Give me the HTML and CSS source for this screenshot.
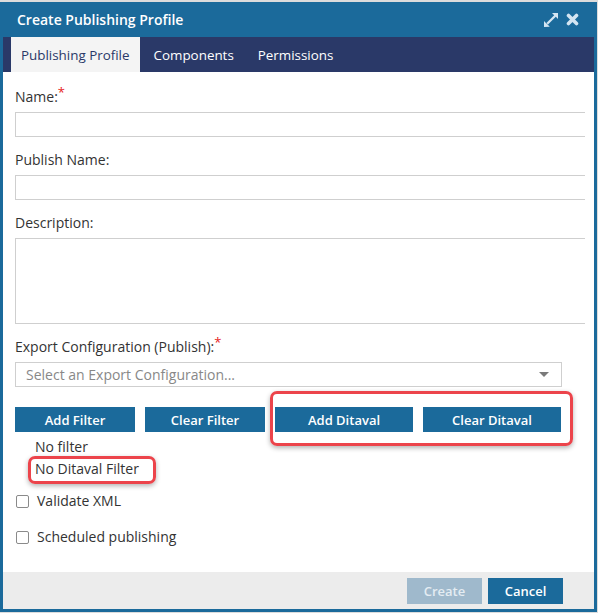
FILE: index.html
```html
<!DOCTYPE html>
<html>
<head>
<meta charset="utf-8">
<link rel="stylesheet" href="styles.css">
</head>
<body>
<div class="dialog">
  <div class="header">
    <span class="title">Create Publishing Profile</span>
    <span class="hicons">
      <svg class="ico" width="16" height="16" viewBox="0 0 16 16">
        <path d="M9 1 H15 V7 L12.8 4.8 L5 12.6 L3.4 11 L11.2 3.2 Z" fill="#d4e5f2"/>
        <path d="M1 15 V9 L3.2 11.2 L4.6 12.6 L6.8 14.8 Z" fill="#d4e5f2"/>
      </svg>
      <svg class="ico" width="13" height="13" viewBox="0 0 13 13">
        <path d="M2.5 2.5 L10.5 10.5 M10.5 2.5 L2.5 10.5" stroke="#d4e5f2" stroke-width="3.6" stroke-linecap="round" fill="none"/>
      </svg>
    </span>
  </div>
  <div class="tabs">
    <div class="tab active">Publishing Profile</div>
    <div class="tab">Components</div>
    <div class="tab">Permissions</div>
  </div>
  <div class="content">
    <div class="label">Name:<span class="req">*</span></div>
    <div class="input"></div>
    <div class="label">Publish Name:</div>
    <div class="input"></div>
    <div class="label">Description:</div>
    <div class="input textarea"></div>
    <div class="label">Export Configuration (Publish):<span class="req">*</span></div>
    <div class="select"><span>Select an Export Configuration...</span><span class="caret"></span></div>
    <div class="btnrow">
      <div class="btn w120">Add Filter</div>
      <div class="btn w120">Clear Filter</div>
      <div class="btn w138">Add Ditaval</div>
      <div class="btn w138">Clear Ditaval</div>
    </div>
    <div class="status">
      <div class="sline">No filter</div>
      <div class="sline">No Ditaval Filter</div>
    </div>
    <div class="check first"><span class="box"></span>Validate XML</div>
    <div class="check"><span class="box"></span>Scheduled publishing</div>
    <div class="mark mark1"></div>
    <div class="mark mark2"></div>
  </div>
  <div class="footer">
    <div class="fbtn disabled">Create</div>
    <div class="fbtn">Cancel</div>
  </div>
</div>
</body>
</html>
```
FILE: styles.css
```css
html, body {
  margin: 0;
  padding: 0;
  background: #dcdcdc;
  font-family: "Open Sans", "Liberation Sans", sans-serif;
  font-size: 14px;
  color: #333;
}
.dialog {
  margin-top: 2px;
  width: 597px;
  height: 610px;
  box-sizing: border-box;
  border: 3px solid #1b6a9b;
  border-top: 0;
  display: flex;
  flex-direction: column;
  background: #fff;
}
.header {
  height: 35px;
  flex: none;
  background: #1b6a9b;
  color: #fff;
  display: flex;
  align-items: center;
  justify-content: space-between;
  padding: 0 15px 0 14px;
}
.title {
  font-weight: 600;
  font-size: 14px;
}
.hicons {
  display: flex;
  align-items: center;
  gap: 7px;
}
.ico { display: block; }
.tabs {
  height: 35px;
  flex: none;
  background: #2a3968;
  display: flex;
  padding-left: 8px;
}
.tab {
  color: #fff;
  padding: 0 10px;
  margin-right: 4px;
  line-height: 36px;
  font-size: 13.4px;
}
.tab.active {
  background: #f4f4f4;
  color: #2a3968;
}
.content {
  flex: 1;
  position: relative;
  background: #fff;
  padding: 15px 9px 0 12px;
}
.label {
  line-height: 20px;
  margin-bottom: 5px;
}
.req {
  color: #e62222;
  position: relative;
  top: -5px;
  font-size: 13px;
}
.input {
  height: 25px;
  box-sizing: border-box;
  border: 1px solid #cfcfcf;
  border-right: 0;
  margin-bottom: 13px;
}
.textarea {
  height: 86px;
}
.select {
  width: 547px;
  height: 25px;
  box-sizing: border-box;
  border: 1px solid #cfcfcf;
  display: flex;
  align-items: center;
  justify-content: space-between;
  padding: 0 12px 0 10px;
  color: #888;
}
.caret {
  width: 0;
  height: 0;
  border-left: 5px solid transparent;
  border-right: 5px solid transparent;
  border-top: 5px solid #7a7a7a;
}
.btnrow {
  display: flex;
  gap: 10px;
  margin-top: 20px;
}
.btn {
  height: 25px;
  line-height: 26px;
  background: #1b6a9b;
  color: #fff;
  text-align: center;
  font-weight: 600;
  font-size: 13px;
}
.w120 { width: 120px; }
.w138 { width: 138px; }
.status {
  margin-top: 4px;
  padding-left: 20px;
}
.sline {
  line-height: 22px;
}
.check {
  display: flex;
  align-items: center;
  line-height: 20px;
  margin-top: 16px;
}
.check.first { margin-top: 11px; }
.box {
  width: 13px;
  height: 13px;
  box-sizing: border-box;
  border: 1px solid #8a8a8a;
  border-radius: 2px;
  margin: 0 8px 0 1px;
  background: #fff;
}
.mark {
  position: absolute;
  border: 3px solid #ec444b;
  border-radius: 7px;
  box-shadow: 0 2px 5px rgba(0,0,0,0.3);
  box-sizing: border-box;
}
.mark1 {
  left: 267px;
  top: 319px;
  width: 303px;
  height: 55px;
}
.mark2 {
  left: 25px;
  top: 384px;
  width: 128px;
  height: 28px;
}
.footer {
  height: 37px;
  flex: none;
  background: #ececec;
  display: flex;
  justify-content: flex-end;
  gap: 6px;
  padding: 6px 31px 0 0;
  box-sizing: border-box;
}
.fbtn {
  width: 75px;
  height: 26px;
  line-height: 26px;
  background: #1b6a9b;
  color: #fff;
  text-align: center;
  font-weight: 600;
  font-size: 13px;
}
.fbtn.disabled {
  background: #9fb9cc;
  color: #e4ecf2;
}
```
